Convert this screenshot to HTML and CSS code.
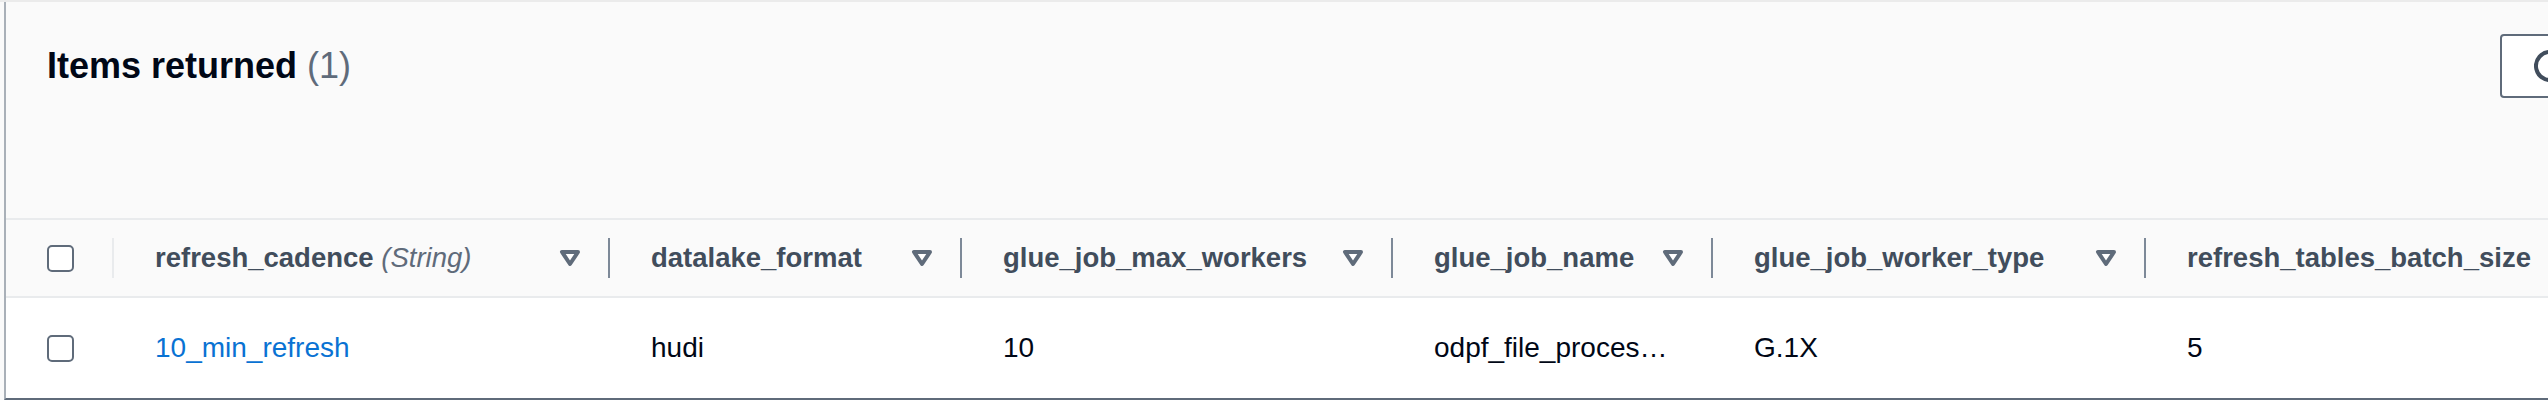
FILE: index.html
```html
<!DOCTYPE html>
<html lang="en">
<head>
<meta charset="utf-8">
<title>Items returned</title>
<link rel="stylesheet" href="styles.css">
</head>
<body>
<div class="page">
  <section class="container">
    <header class="container-header">
      <h2 class="title">Items returned <span class="count">(1)</span></h2>
      <div class="actions">
        <button class="icon-button" type="button" aria-label="Refresh">
          <svg class="icon" width="32" height="32" viewBox="0 0 16 16" aria-hidden="true">
            <path d="M10 5h5V0" fill="none" stroke="#414d5c" stroke-width="2" stroke-linejoin="round"/>
            <path d="M15 8a7 7 0 1 1-.78-3.21" fill="none" stroke="#414d5c" stroke-width="2"/>
          </svg>
        </button>
      </div>
    </header>
    <table class="items">
      <colgroup>
        <col class="col-sel">
        <col class="col-1">
        <col class="col-2">
        <col class="col-3">
        <col class="col-4">
        <col class="col-5">
        <col class="col-6">
      </colgroup>
      <thead>
        <tr>
          <th class="head">
            <div class="head-inner">
              <span class="checkbox" role="checkbox" aria-checked="false"></span>
              <span class="divider divider-light"></span>
            </div>
          </th>
          <th class="head">
            <div class="head-inner">
              <span class="label">refresh_cadence <em class="type">(String)</em></span>
              <svg class="sort" width="32" height="32" viewBox="0 0 16 16" aria-hidden="true"><path d="M4 5h8l-4 6-4-6z" fill="#fff" stroke="#5f6b7a" stroke-width="2" stroke-linejoin="round"/></svg>
              <span class="divider"></span>
            </div>
          </th>
          <th class="head">
            <div class="head-inner">
              <span class="label">datalake_format</span>
              <svg class="sort" width="32" height="32" viewBox="0 0 16 16" aria-hidden="true"><path d="M4 5h8l-4 6-4-6z" fill="#fff" stroke="#5f6b7a" stroke-width="2" stroke-linejoin="round"/></svg>
              <span class="divider"></span>
            </div>
          </th>
          <th class="head">
            <div class="head-inner">
              <span class="label">glue_job_max_workers</span>
              <svg class="sort" width="32" height="32" viewBox="0 0 16 16" aria-hidden="true"><path d="M4 5h8l-4 6-4-6z" fill="#fff" stroke="#5f6b7a" stroke-width="2" stroke-linejoin="round"/></svg>
              <span class="divider"></span>
            </div>
          </th>
          <th class="head">
            <div class="head-inner">
              <span class="label">glue_job_name</span>
              <svg class="sort" width="32" height="32" viewBox="0 0 16 16" aria-hidden="true"><path d="M4 5h8l-4 6-4-6z" fill="#fff" stroke="#5f6b7a" stroke-width="2" stroke-linejoin="round"/></svg>
              <span class="divider"></span>
            </div>
          </th>
          <th class="head">
            <div class="head-inner">
              <span class="label">glue_job_worker_type</span>
              <svg class="sort" width="32" height="32" viewBox="0 0 16 16" aria-hidden="true"><path d="M4 5h8l-4 6-4-6z" fill="#fff" stroke="#5f6b7a" stroke-width="2" stroke-linejoin="round"/></svg>
              <span class="divider"></span>
            </div>
          </th>
          <th class="head">
            <div class="head-inner">
              <span class="label">refresh_tables_batch_size</span>
            </div>
          </th>
        </tr>
      </thead>
      <tbody>
        <tr>
          <td class="cell"><div class="cell-inner"><span class="checkbox" role="checkbox" aria-checked="false"></span></div></td>
          <td class="cell"><div class="cell-inner"><a class="link" href="#">10_min_refresh</a></div></td>
          <td class="cell"><div class="cell-inner">hudi</div></td>
          <td class="cell"><div class="cell-inner">10</div></td>
          <td class="cell"><div class="cell-inner" title="odpf_file_processor">odpf_file_proces…</div></td>
          <td class="cell"><div class="cell-inner">G.1X</div></td>
          <td class="cell"><div class="cell-inner">5</div></td>
        </tr>
      </tbody>
    </table>
  </section>
</div>
</body>
</html>
```
FILE: styles.css
```css
html, body {
  margin: 0;
  padding: 0;
  overflow: hidden;
}

body {
  background: #fafafa;
  font-family: "Liberation Sans", Arial, sans-serif;
  color: #000716;
}

.page {
  border-top: 2px solid #ebebeb;
  padding-left: 4px;
  background: #fafafa;
}

.container {
  width: 2642px;
  border-left: 2px solid #a9b0b8;
  border-bottom: 2px solid #5f6b7a;
  background: #fafafa;
}

.container-header {
  display: flex;
  align-items: center;
  justify-content: space-between;
  padding: 32px 48px 120px 41px;
}

.title {
  margin: 0;
  font-size: 36px;
  font-weight: 700;
  line-height: 44px;
  color: #000716;
}

.count {
  font-weight: 400;
  color: #5f6b7a;
}

.actions {
  display: flex;
  gap: 16px;
}

.icon-button {
  display: flex;
  align-items: center;
  height: 64px;
  padding: 0 32px;
  border: 2px solid #5f6b7a;
  border-radius: 4px;
  background: #ffffff;
}

.icon {
  display: block;
}

.items {
  table-layout: fixed;
  width: 2640px;
  border-collapse: separate;
  border-spacing: 0;
}

.col-sel { width: 108px; }
.col-1 { width: 496px; }
.col-2 { width: 352px; }
.col-3 { width: 431px; }
.col-4 { width: 320px; }
.col-5 { width: 433px; }
.col-6 { width: 500px; }

.head {
  padding: 0 0 0 41px;
  border-top: 2px solid #e9ebed;
  border-bottom: 2px solid #e9ebed;
  background: #fafafa;
  text-align: left;
  font-size: 27.5px;
  font-weight: 700;
  color: #414d5c;
}

.head-inner {
  display: flex;
  align-items: center;
  height: 76px;
}

.label {
  flex: 1;
  white-space: nowrap;
}

.type {
  font-weight: 400;
  font-style: italic;
  color: #5f6b7a;
}

.sort {
  display: block;
  flex-shrink: 0;
  margin-right: 22px;
}

.divider {
  flex-shrink: 0;
  width: 2px;
  height: 40px;
  background: #7d8998;
}

.divider-light {
  margin-left: auto;
  background: #e9ebed;
}

.checkbox {
  display: block;
  box-sizing: border-box;
  width: 27px;
  height: 27px;
  border: 2px solid #5f6b7a;
  border-radius: 5px;
  background: #ffffff;
}

.cell {
  padding: 0 0 0 41px;
  background: #ffffff;
  font-size: 28px;
  color: #000716;
}

.cell-inner {
  display: flex;
  align-items: center;
  height: 100px;
  white-space: nowrap;
}

.link {
  color: #0972d3;
  text-decoration: none;
}
```
